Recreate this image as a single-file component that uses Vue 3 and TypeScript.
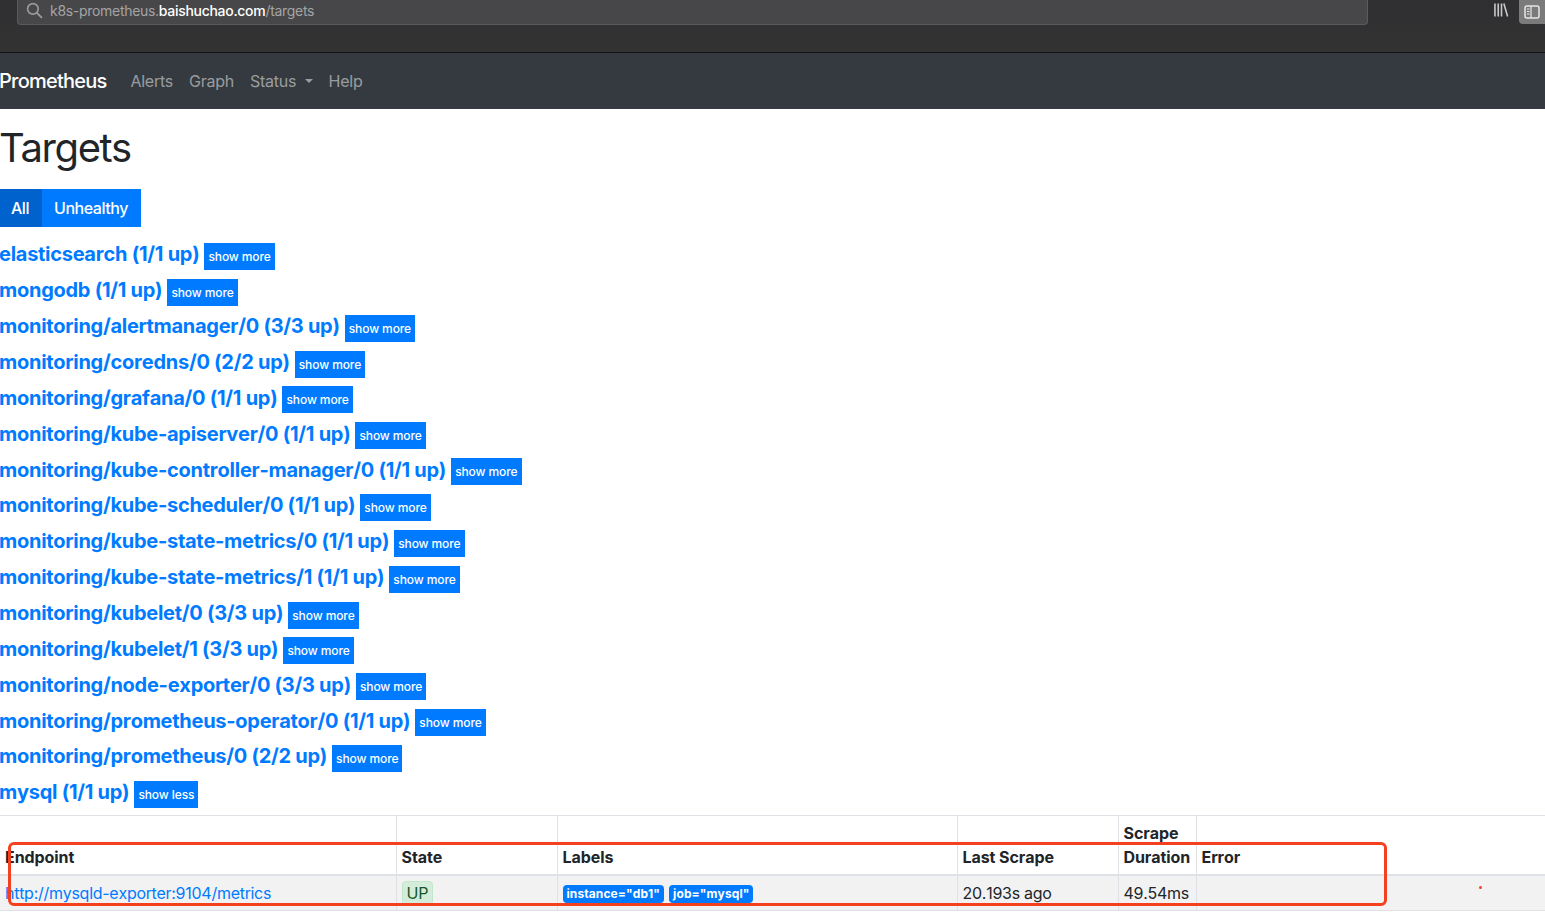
<script setup lang="ts">
interface Pool {
  name: string
  up: string
  open?: boolean
}

const pools: Pool[] = [
  { name: 'elasticsearch', up: '1/1' },
  { name: 'mongodb', up: '1/1' },
  { name: 'monitoring/alertmanager/0', up: '3/3' },
  { name: 'monitoring/coredns/0', up: '2/2' },
  { name: 'monitoring/grafana/0', up: '1/1' },
  { name: 'monitoring/kube-apiserver/0', up: '1/1' },
  { name: 'monitoring/kube-controller-manager/0', up: '1/1' },
  { name: 'monitoring/kube-scheduler/0', up: '1/1' },
  { name: 'monitoring/kube-state-metrics/0', up: '1/1' },
  { name: 'monitoring/kube-state-metrics/1', up: '1/1' },
  { name: 'monitoring/kubelet/0', up: '3/3' },
  { name: 'monitoring/kubelet/1', up: '3/3' },
  { name: 'monitoring/node-exporter/0', up: '3/3' },
  { name: 'monitoring/prometheus-operator/0', up: '1/1' },
  { name: 'monitoring/prometheus/0', up: '2/2' },
  { name: 'mysql', up: '1/1', open: true },
]
</script>

<template>
  <div class="page">
    <div class="chrome">
      <div class="urlbar">
        <svg class="search" viewBox="0 0 16 16" width="17" height="17">
          <circle cx="6.5" cy="6.5" r="5" fill="none" stroke="#9a9a9c" stroke-width="1.6" />
          <path d="M10.2 10.2 15 15" stroke="#9a9a9c" stroke-width="1.8" />
        </svg>
        <span class="url">k8s-prometheus.<b>baishuchao.com</b>/targets</span>
      </div>
      <svg class="library" viewBox="0 0 16 14" width="16" height="14">
        <path d="M1 0v14M4.5 0v14M8 0v14M10.500 0l4 14" stroke="#c8c8c9" stroke-width="1.7" fill="none" />
      </svg>
      <div class="sidebar-btn">
        <svg viewBox="0 0 16 14" width="16" height="14">
          <rect x="1" y="1" width="14" height="12" rx="2" fill="none" stroke="#e6e6e6" stroke-width="1.5" />
          <path d="M7 1v12M3 4h2.500M3 6.500h2.500M3 9h2.500" stroke="#e6e6e6" stroke-width="1.200" fill="none" />
        </svg>
      </div>
    </div>

    <nav class="navbar">
      <a class="brand">Prometheus</a>
      <a class="nav-link">Alerts</a>
      <a class="nav-link">Graph</a>
      <a class="nav-link status">Status<i class="caret"></i></a>
      <a class="nav-link">Help</a>
    </nav>

    <h1>Targets</h1>

    <div class="btn-group">
      <button class="active">All</button>
      <button>Unhealthy</button>
    </div>

    <div class="pools">
      <div v-for="pool in pools" :key="pool.name" class="pool">
        <a class="pool-name">{{ pool.name }} ({{ pool.up }} up)</a>
        <button class="toggle">{{ pool.open ? 'show less' : 'show more' }}</button>
      </div>
    </div>

    <table>
      <thead>
        <tr>
          <th class="c1">Endpoint</th>
          <th class="c2">State</th>
          <th class="c3">Labels</th>
          <th class="c4">Last Scrape</th>
          <th class="c5">Scrape Duration</th>
          <th>Error</th>
        </tr>
      </thead>
      <tbody>
        <tr>
          <td><a class="endpoint">http://mysqld-exporter:9104/metrics</a></td>
          <td><span class="state">UP</span></td>
          <td class="labels">
            <span class="label">instance="db1"</span>
            <span class="label">job="mysql"</span>
          </td>
          <td>20.193s ago</td>
          <td>49.54ms</td>
          <td></td>
        </tr>
      </tbody>
    </table>

    <div class="highlight"></div>
    <div class="red-dot"></div>
  </div>
</template>

<style>
html,
body {
  margin: 0;
  background: #fff;
  overflow: hidden;
}
</style>

<style scoped>
.page {
  position: relative;
  width: 1545px;
  height: 919px;
  overflow: hidden;
  font-family: Inter, "Liberation Sans", sans-serif;
  color: #212529;
  letter-spacing: -0.2px;
}

.chrome {
  display: flex;
  align-items: flex-start;
  height: 52px;
  background: linear-gradient(#2f2f31, #333334);
  border-bottom: 1px solid #141416;
}

.urlbar {
  display: flex;
  flex-shrink: 0;
  align-items: center;
  box-sizing: border-box;
  width: 1351px;
  height: 25px;
  margin-left: 17px;
  padding: 0 0 4px 8px;
  background: #474749;
  border: 1px solid #5b5b5d;
  border-top: 0;
  border-radius: 0 0 4px 4px;
}

.search {
  margin-right: 7px;
}

.url {
  font-size: 14px;
  color: #a4a4a6;
  letter-spacing: -0.3px;
}

.url b {
  font-weight: 500;
  color: #fff;
}

.library {
  margin: 3px 0 0 126px;
}

.sidebar-btn {
  display: flex;
  align-items: center;
  justify-content: center;
  flex-shrink: 0;
  width: 26px;
  height: 24px;
  margin-left: 10px;
  background: #7b7b7c;
  border-radius: 0 0 0 4px;
}

.navbar {
  display: flex;
  align-items: center;
  height: 56px;
  background: #343a40;
}

.brand {
  margin-left: -1px;
  margin-right: 24px;
  font-size: 20px;
  font-weight: 500;
  color: #fff;
  letter-spacing: -0.78px;
}

.nav-link {
  display: flex;
  align-items: center;
  margin-right: 16px;
  font-size: 16px;
  color: rgba(255, 255, 255, 0.5);
  letter-spacing: -0.25px;
}

.nav-link.status {
  margin-right: 15.5px;
}

.caret {
  width: 0;
  height: 0;
  margin-left: 9px;
  border-top: 4px solid rgba(255, 255, 255, 0.5);
  border-left: 4px solid transparent;
  border-right: 4px solid transparent;
}

h1 {
  margin: 0 0 0 -1px;
  padding-top: 16px;
  height: 64px;
  font-size: 40px;
  line-height: 46px;
  font-weight: 400;
  letter-spacing: -1.4px;
}

.btn-group {
  display: flex;
  height: 38px;
}

.btn-group button {
  padding: 0 13px 0 12px;
  border: 0;
  background: #007bff;
  color: #fff;
  font: inherit;
  font-size: 16px;
  font-weight: 500;
  letter-spacing: -0.45px;
}

.btn-group button.active {
  width: 42px;
  padding: 0 2px 0 0;
  background: #0062cc;
}

.pools {
  margin-top: 9.5px;
}

.pool {
  display: flex;
  align-items: center;
  height: 35.87px;
}

.pool-name {
  margin-left: -1px;
  font-size: 20px;
  font-weight: 700;
  font-kerning: none;
  color: #007bff;
  letter-spacing: -0.27px;
}

.toggle {
  height: 27px;
  margin: 4px 0 0 5px;
  padding: 0 4px;
  border: 0;
  background: #007bff;
  color: #fff;
  font: inherit;
  font-size: 12px;
  font-weight: 500;
  letter-spacing: -0.1px;
}

table {
  width: 1545px;
  margin-top: 4.5px;
  border-collapse: collapse;
  table-layout: fixed;
  font-size: 16px;
  font-kerning: none;
  letter-spacing: -0.27px;
}

th,
td {
  padding: 5px;
  text-align: left;
  vertical-align: bottom;
  border: 1px solid #dee2e6;
  line-height: 24px;
}

th:first-child,
td:first-child {
  border-left: 0;
}

th:last-child,
td:last-child {
  border-right: 0;
}

th {
  height: 60px;
  box-sizing: border-box;
  font-weight: 700;
  letter-spacing: -0.08px;
  border-bottom-width: 2px;
}

td {
  height: 35px;
  box-sizing: border-box;
  padding: 4px 5px 5px;
  background: #f2f2f2;
}

.c1 { width: 396px; }
.c2 { width: 161px; }
.c3 { width: 400px; }
.c4 { width: 161px; }
.c5 { width: 78px; }

.endpoint {
  color: #007bff;
}

.state {
  display: inline-block;
  padding: 0 4px;
  line-height: 22px;
  color: #155724;
  background: #d4edda;
  border: 1px solid #c3e6cb;
  border-radius: 4px;
}

td.labels {
  font-size: 0;
  line-height: 0;
  padding-bottom: 7px;
}

.label {
  display: inline-block;
  margin-right: 5px;
  padding: 0 4px;
  font-size: 12px;
  font-weight: 700;
  line-height: 18px;
  color: #fff;
  background: #007bff;
  border-radius: 4px;
  letter-spacing: 0.1px;
}

.highlight {
  position: absolute;
  left: 8px;
  top: 842px;
  width: 1379px;
  height: 64px;
  box-sizing: border-box;
  border: 3px solid #f5401f;
  border-radius: 6px;
}

.red-dot {
  position: absolute;
  left: 1479px;
  top: 886px;
  width: 3px;
  height: 3px;
  background: #f5401f;
  border-radius: 50%;
}
</style>
